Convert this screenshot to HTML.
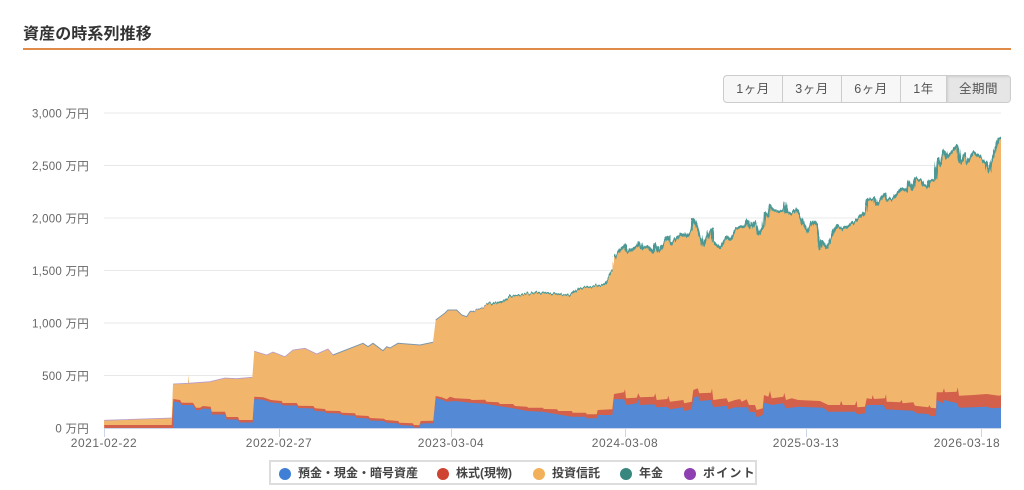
<!DOCTYPE html>
<html lang="ja"><head><meta charset="utf-8"><title>資産の時系列推移</title>
<style>
html,body{margin:0;padding:0;background:#fff;width:1024px;height:490px;overflow:hidden}
body{position:relative;font-family:"Liberation Sans","Noto Sans CJK JP",sans-serif}
h1{position:absolute;left:23px;top:23px;margin:0;font-size:16px;line-height:24px;font-weight:700;color:#333;letter-spacing:.1px}
.rule{position:absolute;left:23px;top:48px;width:988px;height:2px;background:#e08a4a}
.btns{position:absolute;left:723px;top:75px;width:286px;height:26px;display:flex;border:1px solid #ccc;border-radius:4px;background:#f7f7f7;overflow:hidden}
.btns div{box-sizing:border-box;text-align:center;font-size:12.5px;line-height:26px;color:#555;border-right:1px solid #ccc;letter-spacing:.5px}
.btns div:last-child{border-right:0;background:#e6e6e6;box-shadow:inset 1px 1px 2px rgba(0,0,0,.1)}
svg{position:absolute;left:0;top:0}
svg text{font-family:"Liberation Sans","Noto Sans CJK JP",sans-serif}
.y{font-size:11.5px;fill:#666;text-anchor:end;letter-spacing:.25px}
.x{font-size:12px;fill:#666;text-anchor:middle;letter-spacing:.5px}
.legend{position:absolute;left:269px;top:460px;width:484px;height:21px;border:2px solid #ddd;background:#fff}
.legend i{position:absolute;top:5.5px;width:12px;height:12px;border-radius:50%}
.legend span{position:absolute;top:0;font-size:12px;line-height:23px;font-weight:700;color:#444;white-space:nowrap}
</style></head><body>
<h1>資産の時系列推移</h1>
<div class="rule"></div>
<div class="btns">
<div style="width:59px">1ヶ月</div><div style="width:59px">3ヶ月</div><div style="width:59px">6ヶ月</div><div style="width:46px">1年</div><div style="width:63px">全期間</div>
</div>
<svg width="1024" height="490" viewBox="0 0 1024 490">
<defs>
<filter id="j" filterUnits="userSpaceOnUse" x="440" y="100" width="565" height="335" color-interpolation-filters="sRGB">
<feTurbulence type="fractalNoise" baseFrequency="0.45 0.02" numOctaves="2" seed="4" result="n"/>
<feDisplacementMap in="SourceGraphic" in2="n" scale="6" xChannelSelector="G" yChannelSelector="R"/>
</filter>
<clipPath id="c"><rect x="470" y="100" width="531" height="328"/></clipPath>
<clipPath id="d"><rect x="104" y="100" width="366" height="328"/></clipPath>
<g id="area">
<path fill="#f1b66c" d="M100 435V420.4L104.3 420.3L171.7 418L173 384L188 383.5L188.5 374L189 383.3L210 381.7L225 378L236.7 378.7L252.3 377.3L254.3 351.3L260 353L266.7 355L273 352L285 356.7L293 350L305 348.3L316.7 354L328 349L333 355L363 343.3L368 346.7L373 343.3L383 350.7L386.7 346.7L390 348L398 343.3L420 345L433 342.3L435.7 320L445 313L448 310L456.7 310L461.7 315L466.7 316.7L470 311.7L483 306.7L486.7 304L503 301.7L510 296L525 294L540 292.5L555 294L570 295L580 288L595 286L605 283L612 270L614 257L620 250L625 245L627.3 251.7L631.7 250L638.3 245L639.3 241.7L641.7 248.3L648.3 246.7L653.3 252.7L655 243.3L658.3 252.7L668.3 236.7L670 245L681.7 233.3L685 236.7L691.7 229.3L693.3 218.3L696.7 225L703.3 246.7L710 229.3L711.7 230L713.3 241.7L719.3 248.3L726.7 236.7L730 240L736.7 228.3L745 226.7L747.3 220L750 228.3L755 220L758.3 235L763.3 226.7L764 211.7L768.3 216.7L770 205L773.3 210L782.7 211.7L784.3 201.7L786.7 211.7L791.7 213.3L796.7 209L807.3 231.7L813.3 221.7L816.7 226.7L820 250L821.7 240L826.7 248.3L836.7 225L843.3 228.3L856.7 220L865 211.7L866.7 200L875 198.3L876.7 205L885 193.3L886.7 200L893.3 198.3L901.7 188.3L906.7 191.7L907.3 180L911.7 190L915 178.3L921.7 180L923.3 185L928.3 186.7L930 180L935 180L937.3 158.3L940 166.7L944 150L946.7 158.3L957.3 145L960 163.3L965 153.3L968.3 163.3L973.3 151.7L986.7 163.3L989.3 171.7L993.3 156.7L998.3 138.3L1004 136V435Z"/>
<path fill="none" stroke="#b79ac8" stroke-width=".8" d="M104.3 420.3L171.7 418M173 384L188 383.3L210 381.7L225 378L236.7 378.7L252.3 377.3M254.3 351.3L266.7 355L273 352L285 356.7L293 350L305 348.3L316.7 354L328 349L333 355"/>
<path fill="none" stroke="#7f96ab" stroke-width="1" d="M333 355L363 343.3L368 346.7L373 343.3L383 350.7L386.7 346.7L390 348L398 343.3L420 345L433 342.3M435.7 320L445 313L448 310L456.7 310L461.7 315L466.7 316.7L470 311.7L483 306.7L486.7 304"/>
<path fill="none" stroke="#4c9894" stroke-width="1.6" d="M486.7 304L503 301.7L510 296L525 294L540 292.5L555 294L570 295L580 288L595 286L605 283L612 270"/>
<path fill="none" stroke="#4c9894" stroke-width="2.4" stroke-linejoin="bevel" d="M614 257L620 250L625 245L627.3 251.7L631.7 250L638.3 245L639.3 241.7L641.7 248.3L648.3 246.7L653.3 252.7L655 243.3L658.3 252.7L668.3 236.7L670 245L681.7 233.3L685 236.7L691.7 229.3L693.3 218.3L696.7 225L703.3 246.7L710 229.3L711.7 230L713.3 241.7L719.3 248.3L726.7 236.7L730 240L736.7 228.3L745 226.7L747.3 220L750 228.3L755 220L758.3 235L763.3 226.7L764 211.7L768.3 216.7L770 205L773.3 210L782.7 211.7L784.3 201.7L786.7 211.7L791.7 213.3L796.7 209L807.3 231.7L813.3 221.7L816.7 226.7L820 250L821.7 240L826.7 248.3L836.7 225L843.3 228.3L856.7 220L865 211.7L866.7 200L875 198.3L876.7 205L885 193.3L886.7 200L893.3 198.3L901.7 188.3L906.7 191.7L907.3 180L911.7 190L915 178.3L921.7 180L923.3 185L928.3 186.7L930 180L935 180L937.3 158.3L940 166.7L944 150L946.7 158.3L957.3 145L960 163.3L965 153.3L968.3 163.3L973.3 151.7L986.7 163.3L989.3 171.7L993.3 156.7L998.3 138.3L1004 136"/>
</g>
</defs>
<g stroke="#e8e8e8" stroke-width="1">
<path d="M104 113H1001M104 165.5H1001M104 218H1001M104 270.5H1001M104 323H1001M104 375.5H1001"/>
</g>
<text class="y" x="89" y="117.5">3,000 万円</text>
<text class="y" x="89" y="170">2,500 万円</text>
<text class="y" x="89" y="222.5">2,000 万円</text>
<text class="y" x="89" y="275">1,500 万円</text>
<text class="y" x="89" y="327.5">1,000 万円</text>
<text class="y" x="89" y="380">500 万円</text>
<text class="y" x="89" y="432.5">0 万円</text>

<g clip-path="url(#d)"><use href="#area"/></g>
<g clip-path="url(#c)"><g filter="url(#j)"><use href="#area"/></g></g>

<path fill="#d3604a" d="M104.3 428V425L171.7 425L173.3 399L180 400L181.7 402.7L193 402.7L196 407.7L200 407.7L203 406L210.7 406.7L211.7 411.7L225 411.7L226.7 417L238 417L239.3 420L252.7 420L254.3 396.7L263.3 397.3L271 400L281.7 401L282.7 403L296.7 403L298.3 405.7L313.3 406L315 408.3L325 409L326 410.7L340 411L341.7 412.7L355 413.3L356 415.3L368.3 416L370 418L384 418.7L385.7 420L398.3 421L399.3 422.7L412.7 423.3L414 425L419.3 425.3L420.7 421L433.3 420.7L435.7 396L441.7 397.3L446.7 399.3L450 396.7L455 398.3L470 399L471.7 400L485 399.7L486.7 401.7L498.3 402.3L500 404L513 404L515 406L527 406.7L528.3 407.7L542.7 407.7L544 409L557 409.3L558.3 411L571.7 411L572.7 412.7L586 412.7L586.7 414.3L596.7 414.3L597.7 410L612.3 409.3L614 394L624 392.3L625 389L626 398.3L636.7 397.7L638.3 393.3L640 397.3L654 396.7L655.3 393.3L656.7 400L667.3 399L668.3 395.7L670 401.7L683.3 400L684.3 403.3L691.7 401.7L693.3 390L697.7 388.3L699.3 393.3L711 392.7L712 388.3L713.3 400L720 399L726.7 398.3L728.3 402.3L735 400L740 399L741.7 401.7L746.7 399.3L749 405L755 405L756.7 410L762.7 408.3L764 395L768.3 396.7L770 391L771.7 398.3L783.3 396.7L784.3 392.7L786 400L791.7 398.3L798.3 400L820 401L828.3 405L840 405L841 400.7L842.7 405L855 405L856.7 400.7L857.3 407.3L865 406.7L866.7 398.3L871.7 399L872.7 395L874 399L885 398.3L886 394L886.7 401.7L900 402.3L901.7 400L902.7 403.3L913.3 402.3L915 405.7L928.3 407.3L929.3 405L930.7 407.7L936 408.3L936.7 392.3L942.7 392.3L944 388.3L945 392.3L956.7 391.7L957.7 387.3L959 395.7L973.3 395L986.7 394L999.3 395.7L1001 395.3V428Z"/>

<path fill="#5389d5" d="M173.3 428V401.5L180 402.5L181.7 405L193 405L196 410L200 410L203 408.5L210.7 409L211.7 414.5L225 414.5L226.7 419.5L238 419.5L239.3 422.5L252.7 422.5L254.3 399L263.3 399.7L271 402.5L281.7 403.5L282.7 405.5L296.7 405.5L298.3 408L313.3 408.5L315 411L325 411.5L326 413L340 413.5L341.7 415L355 415.7L356 417.7L368.3 418.5L370 420.5L384 421L385.7 422.5L398.3 423.5L399.3 425L412.7 425.7L414 427.5L419.3 427.5L420.7 423.5L433.3 423.3L435.7 398.3L441.7 399.5L446.7 401.7L455 401L470 402.7L485 403.7L498.3 406L513 408.3L527 411L542.7 411.7L557 414.3L571.7 416.7L586 416.7L586.7 418.3L596.7 418.3L597.7 415L612.3 415L614 399.3L624 399.3L626.7 405L636.7 403.3L638.3 399.3L640 405L654 404.3L656.7 407.3L667.3 406.7L670 409.3L683.3 407.3L684.3 411L691.7 409.3L693.3 397.7L698.3 396L699.3 401L711 400L713.3 407.3L726.7 405.7L728.3 409.3L735 407.3L748.3 407.3L749 411.7L755 412.3L756.7 417.3L762.7 415L764 402.7L770 404.3L771.7 405L783.3 403.3L786 408.3L798.3 406.7L823.3 407.7L828.3 411.7L855 411.7L857.3 414.3L865 413.3L866.7 405L883.3 405L886 409.3L913.3 410.7L916.7 413.3L928.3 414L930.7 416L936 416L936.7 400L942.7 403.3L944 400L957.3 403.3L959 407.7L986.7 406.7L991.7 408.3L999.3 407.7L1001 407.7V428Z"/>

<path stroke="#ccd6eb" stroke-width="1" fill="none" d="M104 428.5H1001M104.5 428V437M279.5 428V437M451.5 428V437M625.5 428V437M806.5 428V437M981.5 428V437"/>
<text class="x" x="104" y="447">2021-02-22</text>
<text class="x" x="279" y="447">2022-02-27</text>
<text class="x" x="451" y="447">2023-03-04</text>
<text class="x" x="625" y="447">2024-03-08</text>
<text class="x" x="806" y="447">2025-03-13</text>
<text class="x" x="967" y="447">2026-03-18</text>
</svg>
<div class="legend">
<i style="left:8px;background:#3f80d6"></i><span style="left:27px">預金・現金・暗号資産</span>
<i style="left:166px;background:#cf4331"></i><span style="left:185px">株式(現物)</span>
<i style="left:262px;background:#f3b05a"></i><span style="left:281px">投資信託</span>
<i style="left:349px;background:#37877f"></i><span style="left:368px">年金</span>
<i style="left:413px;background:#8e3fb0"></i><span style="left:432px;letter-spacing:1.2px">ポイント</span>
</div>
</body></html>
